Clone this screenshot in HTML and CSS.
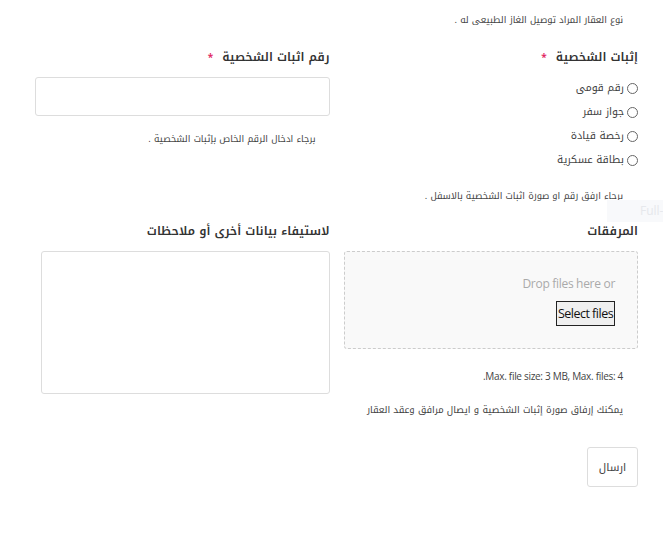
FILE: index.html
```html
<!DOCTYPE html>
<html lang="ar" dir="rtl">
<head>
<meta charset="utf-8">
<title>نموذج</title>
<link rel="stylesheet" href="styles.css">
</head>
<body>
<div class="page">
  <p class="top-note">نوع العقار المراد توصيل الغاز الطبيعى له .</p>
  <div class="grid">
    <section class="col">
      <h3 class="label">إثبات الشخصية <span class="req">*</span></h3>
      <ul class="radios">
        <li><label><span class="radio"></span>رقم قومى</label></li>
        <li><label><span class="radio"></span>جواز سفر</label></li>
        <li><label><span class="radio"></span>رخصة قيادة</label></li>
        <li><label><span class="radio"></span>بطاقة عسكرية</label></li>
      </ul>
      <p class="help help-r">برجاء ارفق رقم او صورة اثبات الشخصية بالاسفل .</p>
    </section>
    <section class="col">
      <h3 class="label">رقم اثبات الشخصية <span class="req">*</span></h3>
      <div class="input"></div>
      <p class="help help-l">برجاء ادخال الرقم الخاص بإثبات الشخصية .</p>
    </section>
    <section class="col">
      <h3 class="label label2">المرفقات</h3>
      <div class="dropzone">
        <p class="drop-text">Drop files here or</p>
        <button class="select-btn" type="button">Select files</button>
      </div>
      <p class="max">Max. file size: 3 MB, Max. files: 4.</p>
      <p class="note">يمكنك إرفاق صورة إثبات الشخصية و ايصال مرافق وعقد العقار</p>
      <button class="submit" type="button">ارسال</button>
    </section>
    <section class="col">
      <h3 class="label label2">لاستيفاء بيانات أخرى أو ملاحظات</h3>
      <div class="textarea"></div>
    </section>
  </div>
  <div class="overlay">Full-</div>
</div>
</body>
</html>
```
FILE: styles.css
```css
html, body {
  margin: 0;
  padding: 0;
  background: #fff;
}
body {
  font-family: "Noto Kufi Arabic", "Noto Sans Arabic", "DejaVu Sans", sans-serif;
  color: #555;
}
.page {
  position: relative;
  overflow: hidden;
  width: 663px;
  height: 545px;
  box-sizing: border-box;
  padding: 13px 25px 0 35px;
}
.top-note {
  margin: 0;
  padding-right: 15px;
  font-size: 9.3px;
  line-height: 14px;
  color: #444;
}
.grid {
  display: grid;
  grid-template-columns: 1fr 1fr;
  column-gap: 14px;
  margin-top: 21px;
}
.col {
  display: flex;
  flex-direction: column;
  align-items: stretch;
}
.label {
  margin: 0;
  font-size: 12px;
  line-height: 18px;
  font-weight: 600;
  color: #333;
}
.label2 {
  margin-top: 19px;
}
.req {
  color: #e0245e;
  font-size: 10px;
  margin-right: 5px;
}
.radios {
  list-style: none;
  margin: 8px 0 0;
  padding: 0;
}
.radios li {
  height: 24px;
  display: flex;
  align-items: center;
  font-size: 10.5px;
  color: #444;
}
.radios label {
  display: flex;
  align-items: center;
  gap: 3px;
}
.radio {
  width: 9px;
  height: 9px;
  border: 1px solid #666;
  border-radius: 50%;
  margin-top: 3px;
}
.help {
  margin: 0;
  font-size: 9.3px;
  line-height: 14px;
  color: #444;
}
.help-r {
  padding-right: 15px;
  margin-top: 18px;
}
.help-l {
  padding-right: 14px;
  margin-top: 16px;
}
.input {
  margin-top: 10px;
  height: 39px;
  border: 1px solid #ddd;
  border-radius: 3px;
  box-sizing: border-box;
  background: #fff;
}
.dropzone {
  margin-top: 11px;
  height: 98px;
  box-sizing: border-box;
  border: 1px dashed #ccc;
  border-radius: 3px;
  background: #f9f9f9;
  padding: 24px 22px 0 0;
  display: flex;
  flex-direction: column;
  align-items: flex-start;
}
.drop-text {
  margin: 0;
  font-family: "Open Sans", sans-serif;
  font-size: 12px;
  line-height: 16px;
  color: #aaa;
  letter-spacing: -0.3px;
}
.select-btn {
  margin-top: 9px;
  height: 25px;
  width: 59px;
  padding: 0;
  font-family: "Open Sans", sans-serif;
  font-size: 12.5px;
  letter-spacing: -0.5px;
  color: #111;
  background: #efefef;
  border: 1px solid #222;
  border-radius: 0;
}
.max {
  margin: 20px 0 0;
  padding-right: 15px;
  font-family: "Open Sans", sans-serif;
  font-size: 10px;
  line-height: 14px;
  color: #444;
  letter-spacing: -0.3px;
}
.note {
  margin: 20px 0 0;
  padding-right: 15px;
  font-size: 9.5px;
  line-height: 14px;
  color: #444;
}
.submit {
  align-self: flex-start;
  margin-top: 30px;
  width: 51px;
  height: 40px;
  padding: 0;
  background: #fff;
  border: 1px solid #ddd;
  border-radius: 3px;
  font-family: inherit;
  font-size: 11px;
  color: #444;
}
.textarea {
  margin-top: 11px;
  margin-left: 6px;
  height: 143px;
  border: 1px solid #ddd;
  border-radius: 3px;
  box-sizing: border-box;
}
.overlay {
  position: absolute;
  left: 607px;
  top: 200px;
  width: 80px;
  height: 22px;
  background: #f8f9fb;
  color: #e6e8ec;
  font-family: "Open Sans", sans-serif;
  font-size: 12px;
  line-height: 22px;
  direction: ltr;
  padding-left: 33px;
  box-sizing: border-box;
}
```
